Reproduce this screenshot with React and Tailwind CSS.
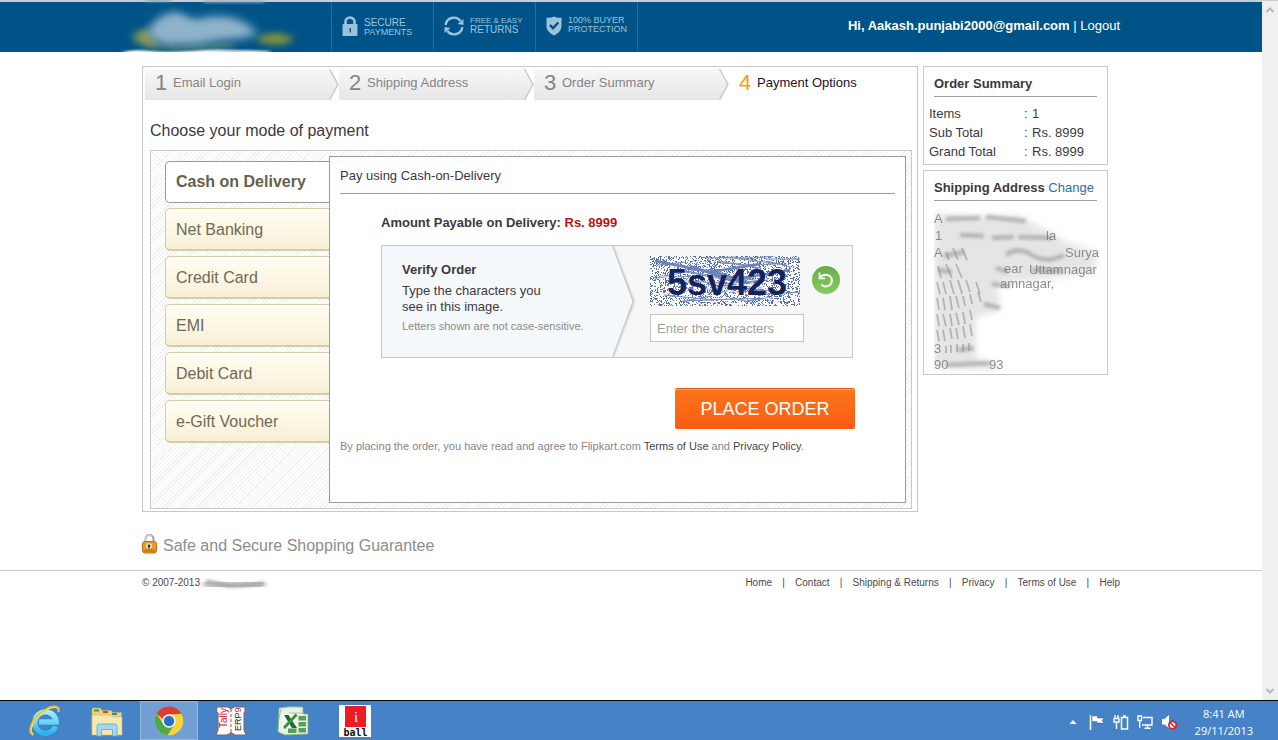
import React from "react";

const steps = [
  { n: 1, label: "Email Login", width: "w-[194px]" },
  { n: 2, label: "Shipping Address", width: "w-[195px]" },
  { n: 3, label: "Order Summary", width: "w-[195px]" },
];

const modes = ["Cash on Delivery", "Net Banking", "Credit Card", "EMI", "Debit Card", "e-Gift Voucher"];

const summary = [
  ["Items", "1"],
  ["Sub Total", "Rs. 8999"],
  ["Grand Total", "Rs. 8999"],
];

const footerLinks = ["Home", "Contact", "Shipping & Returns", "Privacy", "Terms of Use", "Help"];

function makeRandom(seed) {
  let s = seed;
  return () => {
    s = (s * 1103515245 + 12345) % 2147483648;
    return s / 2147483648;
  };
}

function noisePath(seed, count) {
  const next = makeRandom(seed);
  let d = "";
  for (let i = 0; i < count; i++) {
    const x = Math.floor(next() * 150);
    const y = Math.floor(next() * 50);
    d += `M${x} ${y}h1v1h-1z`;
  }
  return d;
}

function strokesPath(seed, count) {
  const next = makeRandom(seed);
  let d = "";
  for (let i = 0; i < count; i++) {
    const x = Math.floor(next() * 120);
    const y = Math.floor(next() * 46) + 2;
    const w = 14 + next() * 40;
    const h = (next() - 0.5) * 16;
    d += `M${x} ${y}l${w.toFixed(0)} ${h.toFixed(0)}`;
  }
  return d;
}

const noise = noisePath(7, 2900);
const scratches = strokesPath(91, 38);

function BrandSmudge() {
  return (
    <svg className="block h-[52px] w-[189px] overflow-visible" viewBox="0 0 189 52" aria-hidden="true">
      <defs>
        <filter id="b6" x="-40" y="-20" width="240" height="100" filterUnits="userSpaceOnUse"><feGaussianBlur stdDeviation="5" /></filter>
        <filter id="b4" x="-40" y="-20" width="240" height="100" filterUnits="userSpaceOnUse"><feGaussianBlur stdDeviation="4 3" /></filter>
        <filter id="b2" x="-60" y="-20" width="260" height="100" filterUnits="userSpaceOnUse"><feGaussianBlur stdDeviation="2 1.2" /></filter>
      </defs>
      <g filter="url(#b4)">
        <path d="M-8 33Q0 24 10 28L18 46Q4 48 -8 38Z" fill="#84965a" />
        <path d="M6 44L90 41L92 46L30 48Z" fill="#6f8f68" opacity="0.8" />
        <ellipse cx="133" cy="37" rx="17" ry="6" fill="#7b913f" />
      </g>
      <path d="M6 28Q16 12 34 10L52 18Q74 12 92 16Q108 22 116 31Q104 38 84 37L56 42L24 42Q8 38 6 28Z" fill="#8db2ca" filter="url(#b6)" />
      <path d="M14 28Q22 14 38 14L54 22Q74 16 92 22L104 30L50 36L22 40Z" fill="#90b3ca" opacity="0.6" filter="url(#b4)" />
      <path d="M-20 50Q-8 47 8 49T50 49T85 48L130 49Q124 52 104 51Q90 50 70 51Q40 58 12 55Q-6 56 -20 50Z" fill="#fff" filter="url(#b2)" />
      <path d="M4 -1h25M62 0h60" stroke="#7ea0bb" strokeWidth="2" filter="url(#b2)" />
    </svg>
  );
}

function LockMark() {
  return (
    <svg className="h-5 w-4" viewBox="0 0 16 20" aria-hidden="true">
      <path d="M3.5 9V5.5a4.5 4 0 0 1 9 0V9" fill="none" stroke="#9cc3dd" strokeWidth="2.6" />
      <rect x="0.5" y="8" width="15" height="12" rx="1" fill="#9cc3dd" />
      <path d="M7.5 12h1.5v4.5h-1.5z" fill="#1d5580" />
    </svg>
  );
}

function ReturnsMark() {
  return (
    <svg className="h-5 w-5" viewBox="0 0 20 20" aria-hidden="true">
      <g fill="none" stroke="#9cc3dd" strokeWidth="2.4">
        <path d="M1.6 9A8.4 8.4 0 0 1 16.600 5" />
        <path d="M18.4 11A8.4 8.4 0 0 1 3.400 15" />
      </g>
      <path d="M19.5 3v6l-6 -1zM0.5 17v-6l6 1z" fill="#9cc3dd" />
    </svg>
  );
}

function ShieldMark() {
  return (
    <svg className="h-5 w-4" viewBox="0 0 16 20" aria-hidden="true">
      <path d="M0.5 1.500Q5 2.500 8 0.500Q11 2.500 15.500 1.500V11Q14.500 16.500 8 19.500Q1.500 16.500 0.500 11Z" fill="#9cc3dd" />
      <path d="M4 9l3 3.300L12.300 6.500" fill="none" stroke="#0d4d7c" strokeWidth="2.400" />
    </svg>
  );
}

function Trust({ icon, top, bottom, topCls, bottomCls }) {
  return (
    <div className="flex w-[102px] items-start gap-1.5 border-l border-[#2b6b99] pt-3.5 pl-2.5 whitespace-nowrap text-[#9cc3dd]">
      {icon}
      <div className="flex flex-col">
        <span className={topCls}>{top}</span>
        <span className={bottomCls}>{bottom}</span>
      </div>
    </div>
  );
}

function Header() {
  return (
    <header className="h-[52px] border-t-2 border-[#c6cdd4] bg-[#005387] px-5">
      <div className="mx-auto flex h-full max-w-[978px]">
        <div className="h-full w-[189px] shrink-0"><BrandSmudge /></div>
        <Trust icon={<LockMark />} top="SECURE" bottom="PAYMENTS" topCls="pt-0.5 text-[10px] leading-[9px]" bottomCls="text-[9px] leading-[10px]" />
        <Trust icon={<ReturnsMark />} top="FREE & EASY" bottom="RETURNS" topCls="text-[8px] leading-[9px]" bottomCls="text-[10px] leading-[10px]" />
        <Trust icon={<ShieldMark />} top="100% BUYER" bottom="PROTECTION" topCls="text-[9px] leading-[9px]" bottomCls="text-[9px] leading-[8px]" />
        <div className="w-px bg-[#2b6b99]" />
        <p className="ml-auto pt-3.5 text-[13px] leading-[20px] whitespace-nowrap text-white">
          <b>Hi, Aakash.punjabi2000@gmail.com</b> | <a href="#logout">Logout</a>
        </p>
      </div>
    </header>
  );
}

function Chevron() {
  return (
    <svg className="ml-auto h-[31px] w-[10px]" viewBox="0 0 10 31" aria-hidden="true">
      <path d="M0 0H10V31H0L9 15.500Z" fill="#fff" />
      <path d="M0.500 0L9 15.500L0.500 31" fill="none" stroke="#c8c8c8" strokeWidth="1.400" />
    </svg>
  );
}

function Steps() {
  return (
    <ol className="flex h-[31px] pl-0.5 leading-[28px]">
      {steps.map((s) => (
        <li key={s.n} className={`${s.width} flex items-start bg-linear-to-b from-[#f8f8f8] to-[#e6e6e6] pl-2.5 text-[#848484]`}>
          <span className="w-[18px] text-[22px]">{s.n}</span>
          <span className="text-[13px]">{s.label}</span>
          <Chevron />
        </li>
      ))}
      <li className="flex items-start pl-2.5">
        <span className="w-[18px] text-[22px] text-[#ff9c0a]">4</span>
        <span className="text-[13px] text-[#1c0f1f]">Payment Options</span>
      </li>
    </ol>
  );
}

function Modes() {
  return (
    <nav className="flex w-[178px] shrink-0 flex-col gap-[5px] pt-[5px] pl-[14px]">
      {modes.map((m, i) => (
        <button
          key={m}
          type="button"
          className={
            i === 0
              ? "h-[42px] rounded-l-[5px] border border-r-0 border-[#99998f] bg-white pl-2.5 text-left text-base font-bold text-[#665f4b]"
              : "h-[43px] rounded-l-[5px] border border-r-0 border-b-2 border-[#d6cba8] bg-linear-to-b from-[#fffef4] to-[#f9efd6] pt-0.5 pl-2.5 text-left text-base text-[#706953]"
          }
        >
          {m}
        </button>
      ))}
    </nav>
  );
}

function Captcha() {
  return (
    <svg className="block h-[50px] w-[150px]" viewBox="0 0 150 50" role="img" aria-label="5sv423">
      <rect width="150" height="50" fill="#fdfdfd" />
      <path d={noise} fill="#5870a9" shapeRendering="crispEdges" />
      <path d={scratches} fill="none" stroke="#7788ba" strokeWidth="1" />
      <path d="M5 5L60 16L110 8M40 10L80 24L140 14M60 14L100 28" fill="none" stroke="#6f82b8" strokeWidth="2.500" />
      <path d="M10 20L130 45M10 38L140 24M20 14L120 34" stroke="#fdfdfd" strokeWidth="1" />
      <text x="17" y="39" fontFamily="Liberation Sans Narrow, Liberation Sans, sans-serif" fontWeight="700" fontSize="36" fill="#13235f">5sv423</text>
    </svg>
  );
}

function Verify() {
  return (
    <div className="flex h-[113px] w-[472px] border border-[#c8c8c8] bg-[#f7f7f7]">
      <div className="w-[230px] bg-[#f4f8fa] pt-4 pl-5 text-[13px] leading-[16px] whitespace-nowrap text-[#3d3a40]">
        <h3 className="pb-[5px] font-bold">Verify Order</h3>
        <p>Type the characters you<br />see in this image.</p>
        <p className="pt-[3px] text-[11px] text-[#8b8b8b]">Letters shown are not case-sensitive.</p>
      </div>
      <svg className="h-[111px] w-[38px]" viewBox="0 0 38 111" aria-hidden="true">
        <defs><filter id="sh"><feGaussianBlur stdDeviation="1" /></filter></defs>
        <path d="M0 0L21 55.500L0 111" fill="none" stroke="#b4b4b4" strokeWidth="2.400" filter="url(#sh)" />
        <path d="M0 0L20.500 55.500L0 111Z" fill="#f4f8fa" />
      </svg>
      <div className="flex flex-col gap-2 pt-2.5">
        <Captcha />
        <input
          type="text"
          aria-label="Enter the characters"
          placeholder="Enter the characters"
          className="h-7 w-[154px] border border-[#c4c4c4] bg-white px-1.5 text-[13px] placeholder:text-[#a09f9a]"
        />
      </div>
      <button type="button" aria-label="New image" className="mt-5 ml-2 h-7 w-7">
        <svg viewBox="0 0 28 28" aria-hidden="true">
          <defs><linearGradient id="g" x2="0" y2="1"><stop stopColor="#69ad4a" /><stop offset="1" stopColor="#86cc60" /></linearGradient></defs>
          <circle cx="14" cy="14" r="14" fill="url(#g)" />
          <path d="M8.500 10.800C13 7 19.800 9 19.800 14.500C19.800 20.500 13 22 9.500 18.800" fill="none" stroke="#fff" strokeWidth="2" />
          <path d="M7.500 6.500V12.300H13" fill="none" stroke="#fff" strokeWidth="1.800" />
        </svg>
      </button>
    </div>
  );
}

function PaymentPanel() {
  return (
    <div className="min-w-0 flex-1 border border-[#9b9b8f] bg-white px-2.5 pt-[11px] text-[#3b383f]">
      <h2 className="border-b border-[#9f9f99] pb-[9px] text-[13px] leading-[16px]">Pay using Cash-on-Delivery</h2>
      <div className="pt-[21px] pl-[41px]">
        <p className="pb-3.5 text-[13px] leading-[16px] font-bold">
          Amount Payable on Delivery: <span className="text-[#bb1113]">Rs. 8999</span>
        </p>
        <Verify />
      </div>
      <div className="flex justify-end pt-[30px] pr-10">
        <button type="button" className="h-[41px] w-[180px] rounded-[2px] border-t border-[#d9600f] bg-linear-to-b from-[#fb741b] to-[#f95c12] text-lg text-white shadow-[inset_0_1px_0_#ffa560]">
          PLACE ORDER
        </button>
      </div>
      <p className="pt-2.5 text-[11px] leading-[14px] text-[#85858a]">
        By placing the order, you have read and agree to Flipkart.com <a href="#terms" className="text-[#45424a]">Terms of Use</a> and <a href="#privacy" className="text-[#45424a]">Privacy Policy</a>.
      </p>
    </div>
  );
}

function AddressSmudge() {
  return (
    <svg className="block h-[168px] w-[176px]" viewBox="0 0 176 168" fontFamily="Liberation Sans, Arial, sans-serif" fontSize="13" aria-hidden="true">
      <defs>
        <filter id="s3" x="-30%" y="-30%" width="160%" height="160%"><feGaussianBlur stdDeviation="3" /></filter>
        <filter id="s1" x="-30%" y="-60%" width="160%" height="220%"><feGaussianBlur stdDeviation="1.700 1.500" /></filter>
        <filter id="s0" x="-10%" y="-20%" width="120%" height="140%"><feGaussianBlur stdDeviation="0.700" /></filter>
      </defs>
      <path d="M0 8L86 10L96 16L120 28L132 36L164 46L160 68L115 72L64 78L66 104L42 112L42 152L66 158L62 164L0 162Z" fill="#cfcccf" opacity="0.500" filter="url(#s3)" />
      <g filter="url(#s1)" stroke="#8d898f" fill="none" strokeWidth="5" opacity="0.500">
        <path d="M12 13L46 12M52 11L92 15" />
        <path d="M26 29L50 30M58 32L80 31M84 31L118 32" />
        <path d="M10 50L30 46M72 49Q84 40 98 49T130 49" />
        <path d="M4 64L18 66M62 62L74 66M98 64L128 65" />
        <path d="M58 78L76 80" />
        <path d="M50 98L66 102" />
        <path d="M24 144L40 142M12 159L56 157" />
      </g>
      <g filter="url(#s0)" stroke="#8d898f" fill="none" strokeWidth="1.800" opacity="0.550">
        <path d="M12 46L15 54M19 42L24 54M28 42L33 54M4 60L7 72M12 58L18 72M22 58L28 72" />
        <path d="M3 76L6 88M9 76L12 88M16 74L20 88M24 74L28 88M32 74L36 86M42 76L46 88" />
        <path d="M3 92L5 104M9 92L11 104M16 90L18 104M22 90L25 102M29 90L31 100M36 88L38 98M44 86L47 96" />
        <path d="M3 108L5 120M9 108L12 120M16 108L18 120M22 107L25 119M29 106L31 118M36 104L38 114" />
        <path d="M3 124L5 135M9 124L11 135M16 122L18 133M22 122L24 133M29 120L31 132M36 118L38 130" />
        <path d="M12 140V147M17 139V147M23 138V146M29 138V146M35 137V145" />
      </g>
      <g fill="#77737a" filter="url(#s0)" opacity="0.800">
        <text x="0" y="17">A</text>
        <text x="1" y="34">1</text>
        <text x="112" y="34">la</text>
        <text x="0" y="51">A</text>
        <text x="131" y="51">Surya</text>
        <text x="70" y="67">ear</text>
        <text x="95" y="68">Uttamnagar</text>
        <text x="66" y="82">amnagar,</text>
        <text x="0" y="147">3</text>
        <text x="0" y="163">90</text>
        <text x="55" y="163">93</text>
      </g>
    </svg>
  );
}

function Sidebar() {
  return (
    <aside className="flex w-[185px] shrink-0 flex-col gap-[5px] text-[13px] text-[#3b383f]">
      <section className="h-[99px] border border-[#c8c8c8] bg-white px-[5px] pt-[9px]">
        <h2 className="mx-[5px] border-b border-[#a09f9d] pb-1 leading-[16px] font-bold">Order Summary</h2>
        <table className="mt-[7px] w-full leading-[19px]">
          <tbody>
            {summary.map(([k, v]) => (
              <tr key={k}>
                <th scope="row" className="w-[95px] text-left font-normal">{k}</th>
                <td className="w-2">:</td>
                <td>{v}</td>
              </tr>
            ))}
          </tbody>
        </table>
      </section>
      <section className="h-[205px] border border-[#c8c8c8] bg-white px-2.5 pt-[9px]">
        <h2 className="border-b border-[#a09f9d] pb-1 leading-[16px] font-bold whitespace-nowrap">
          Shipping Address <a href="#change" className="font-normal text-[#2f6ca8]">Change</a>
        </h2>
        <div className="pt-[5px]"><AddressSmudge /></div>
      </section>
    </aside>
  );
}

function Guarantee() {
  return (
    <div className="flex items-start gap-1.5 pt-[22px] pb-3.5">
      <svg className="h-5 w-[15px]" viewBox="0 0 15 20" aria-hidden="true">
        <path d="M3.500 9V5a4 4 0 0 1 8 0V9" fill="none" stroke="#9a9fa0" strokeWidth="2" />
        <path d="M3.500 8V5a4 4 0 0 1 6-3.400" fill="none" stroke="#dfe3e4" strokeWidth="1" />
        <rect x="0.500" y="7.500" width="14" height="11.500" rx="2.500" fill="#f29a1c" stroke="#b07320" />
        <path d="M1.500 16.500Q7 14 13.500 16V18H2Z" fill="#d97a0c" />
        <circle cx="7" cy="12" r="3" fill="#e9e4d4" /><circle cx="7" cy="12" r="1.400" fill="#333" /><path d="M6.500 12h1v3h-1z" fill="#333" />
      </svg>
      <p className="pt-0.5 text-base leading-5 text-[#8d8d8d]">Safe and Secure Shopping Guarantee</p>
    </div>
  );
}

function Footer() {
  return (
    <footer className="border-t border-[#cacaca] px-5 pt-1">
      <div className="mx-auto flex max-w-[978px] items-center justify-between text-[10px] leading-4 text-[#4b484e]">
        <p className="flex items-center">
          © 2007-2013
          <svg className="h-4 w-[70px] overflow-visible" viewBox="0 0 70 16" aria-hidden="true">
            <g filter="url(#s3)"><path d="M4 8L30 11L64 9" fill="none" stroke="#a5a3a6" strokeWidth="8" /></g>
            <g filter="url(#s1)"><path d="M6 6Q14 7 24 10T64 8" fill="none" stroke="#aaa8ab" strokeWidth="3" /></g>
          </svg>
        </p>
        <ul className="flex">
          {footerLinks.map((l, i) => (
            <li key={l} className="flex">
              {i > 0 && <span className="w-[23px] text-center">|</span>}
              <a href="#footer">{l}</a>
            </li>
          ))}
        </ul>
      </div>
    </footer>
  );
}

function Scrollbar() {
  return (
    <div className="flex w-4 shrink-0 flex-col items-center justify-between border-t border-[#c6cdd4] bg-[#f0f0f0] py-1">
      <svg className="h-2.5 w-2.5" viewBox="0 0 10 10" aria-hidden="true"><path d="M1.500 7L5 3.500L8.500 7" fill="none" stroke="#b9b9b9" strokeWidth="2" /></svg>
      <svg className="h-2.5 w-2.5" viewBox="0 0 10 10" aria-hidden="true"><path d="M1.500 3L5 6.500L8.500 3" fill="none" stroke="#b9b9b9" strokeWidth="2" /></svg>
    </div>
  );
}

function ExplorerE() {
  return (
    <svg className="h-8 w-8" viewBox="0 0 32 32" aria-hidden="true">
      <defs><linearGradient id="ie" x2="0" y2="1"><stop stopColor="#a6ecff" /><stop offset="1" stopColor="#2fb2ec" /></linearGradient></defs>
      <path d="M26.500 21.500A10.700 10.700 0 1 1 27.200 17H10" fill="none" stroke="#2187c9" strokeWidth="6.600" />
      <path d="M26.500 21.500A10.700 10.700 0 1 1 27.200 17H10" fill="none" stroke="url(#ie)" strokeWidth="5.400" />
      <path d="M4.500 30C-2 27 3 14 14 6.500C22 0.500 31 -0.500 29.500 7" fill="none" stroke="#f0bd24" strokeWidth="2.400" />
      <path d="M4 29C0 26 3.500 15 14 7.500C21 2 28 1 29 4" fill="none" stroke="#fbe56f" strokeWidth="0.900" />
    </svg>
  );
}

function FolderIcon() {
  return (
    <svg className="h-8 w-8" viewBox="0 0 32 32" aria-hidden="true">
      <path d="M1 8V4.500Q1 3 2.500 3H9l2 2.500H20l2 2H30.500V29H1Z" fill="#e8d283" stroke="#c8aa4b" strokeWidth="0.600" />
      <path d="M3 4.500h5v2H3z" fill="#3c9a51" /><path d="M12 6h5v2h-5z" fill="#c84b36" /><path d="M21 8h5v2h-5z" fill="#3c7cc4" />
      <path d="M1 10H19l2 2H31V30H1Z" fill="#f6e9ad" stroke="#d5bb63" strokeWidth="0.600" />
      <path d="M6 31V21Q6 19 8 19H24Q26 19 26 21V31H21.500V24.500H10.500V31Z" fill="#a5d6f0" stroke="#5fa6d2" strokeWidth="0.800" />
    </svg>
  );
}

function ChromeIcon() {
  return (
    <svg className="h-[30px] w-[30px]" viewBox="0 0 30 30" aria-hidden="true">
      <circle cx="15" cy="15" r="14.300" fill="#f9d33c" />
      <path d="M2.600 7.800A14.300 14.300 0 0 1 27.400 7.800L15 8.500A6.500 6.500 0 0 0 9 13Z" fill="#dc3c33" />
      <path d="M2.600 7.800A14.300 14.300 0 0 0 13.500 29.200L20.500 18.500A6.500 6.500 0 0 1 9.400 18.200Z" fill="#4bab4c" />
      <circle cx="15" cy="15" r="6.700" fill="#f4f6f8" />
      <circle cx="15" cy="15" r="5.200" fill="#2b6fc4" />
    </svg>
  );
}

function TallyIcon() {
  return (
    <svg className="h-8 w-8" viewBox="0 0 32 32" aria-hidden="true">
      <path d="M2 2H13L16 4L19 2H30V6L29 8V25L31 30H20L16 27.500L12 30H1L3 25V8L1.500 6Z" fill="#fff" stroke="#8a5a55" strokeWidth="1" />
      <path d="M16 4V27" stroke="#d13a3a" strokeWidth="1" strokeDasharray="3 2" />
      <text transform="rotate(-90 12 23)" x="12" y="23" fontFamily="Liberation Sans, sans-serif" fontSize="10" fill="#c2202a">Tally</text>
      <text transform="rotate(-90 26 26)" x="26" y="26" fontFamily="Liberation Sans, sans-serif" fontSize="9" fill="#1a1a1a">ERP<tspan fill="#c2202a">9</tspan></text>
    </svg>
  );
}

function SheetIcon() {
  return (
    <svg className="h-8 w-8" viewBox="0 0 32 32" aria-hidden="true">
      <path d="M2 3Q12 1 26 2V9H31V29L8 30L1 27Z" fill="#e8f1e6" stroke="#7eaf79" strokeWidth="0.800" />
      <path d="M12 8H27M4 4Q3 9 2 14" stroke="#9fc79a" strokeWidth="1" />
      <path d="M5 9H20V23H5Z" fill="#f5faf3" />
      <g fill="#5c9e56"><path d="M21.500 11h7.500v4.500h-7.500zM21.500 17h7.500v4.500h-7.500zM21.500 23h7.500v4.500h-7.500zM11 23.500h8.500v4.500H11z" /></g>
      <path d="M7 10H11.500L20 23H15Z" fill="#1f6b2e" />
      <path d="M19.500 9.500L7 23" stroke="#3c8d45" strokeWidth="3" />
    </svg>
  );
}

function BallIcon() {
  return (
    <svg className="h-8 w-8" viewBox="0 0 32 32" aria-hidden="true">
      <rect width="32" height="32" fill="#fff" />
      <rect x="6" y="1" width="21" height="21" fill="#ed1b24" />
      <text x="17" y="17" textAnchor="middle" fontFamily="Liberation Serif, serif" fontSize="15" fill="#fff">i</text>
      <text x="16.500" y="31" textAnchor="middle" fontFamily="DejaVu Sans Mono, monospace" fontWeight="700" fontSize="10" fill="#111">ball</text>
    </svg>
  );
}

const apps = [
  ["Internet Explorer", ExplorerE],
  ["File Explorer", FolderIcon],
  ["Chrome", ChromeIcon],
  ["Tally", TallyIcon],
  ["Excel", SheetIcon],
  ["iball", BallIcon],
];

function TrayIcons() {
  return (
    <div className="flex items-center gap-2">
      <svg className="mr-1 h-4 w-2" viewBox="0 0 8 16" aria-hidden="true"><path d="M0.500 10L4 6L7.500 10Z" fill="#fff" /></svg>
      <svg className="h-4 w-4" viewBox="0 0 16 16" aria-hidden="true">
        <path d="M1.500 1V16" stroke="#fff" strokeWidth="1.500" /><path d="M3 2H8.500V4H15L13 6.500L15 9H8V7.500H3Z" fill="#fff" stroke="#2c4f78" strokeWidth="0.400" />
      </svg>
      <svg className="h-4 w-4" viewBox="0 0 16 16" aria-hidden="true">
        <path d="M2 1V4M5 1V4M0.500 4.500H6.500M1 5V8H6V5M3.500 8V15" fill="none" stroke="#fff" strokeWidth="1.400" />
        <path d="M8.500 3.500H14.500V15H8.500ZM10 2H13" fill="none" stroke="#fff" strokeWidth="1.500" />
      </svg>
      <svg className="h-4 w-4" viewBox="0 0 16 16" aria-hidden="true">
        <path d="M6 3.500H15V11H5M10.500 11V14M7.500 14.300H13.500" fill="none" stroke="#fff" strokeWidth="1.400" />
        <path d="M1 2H4.500V6.500H1ZM2.700 7V14" fill="none" stroke="#fff" strokeWidth="1.400" />
      </svg>
      <svg className="h-4 w-4" viewBox="0 0 16 16" aria-hidden="true">
        <path d="M1 5H3.500L8 1V14L3.500 10.500H1Z" fill="#fff" />
        <circle cx="11.500" cy="11" r="3.700" fill="#fff" stroke="#d8232b" strokeWidth="1.700" /><path d="M9 8.500L14 13.500" stroke="#d8232b" strokeWidth="1.600" />
      </svg>
    </div>
  );
}

function Taskbar() {
  return (
    <div className="flex h-10 shrink-0 border-t border-black bg-[#4683c6] pl-4">
      <div className="flex gap-1">
        {apps.map(([name, Icon]) => (
          <button
            key={name}
            type="button"
            aria-label={name}
            className={`flex w-[58px] items-center justify-center ${name === "Chrome" ? "border border-[#93b8e0] bg-[#719fd3]" : ""}`}
          >
            <Icon />
          </button>
        ))}
      </div>
      <div className="ml-auto flex items-center gap-[18px] pt-0.5 pr-[25px] text-white">
        <TrayIcons />
        <p className="text-center font-['Open_Sans',sans-serif] text-[11px] leading-[17px]">8:41 AM<br />29/11/2013</p>
      </div>
    </div>
  );
}

export default function App() {
  return (
    <div className="flex min-h-screen flex-col bg-white font-['Liberation_Sans',Arial,sans-serif]">
      <div className="flex flex-1">
        <div className="min-w-0 flex-1">
          <Header />
          <main className="px-5 pt-3.5">
            <div className="mx-auto max-w-[978px]">
              <div className="flex items-start gap-[5px] pr-3">
                <section className="min-w-0 flex-1 border border-[#c8c8c8] pt-0.5 pb-0.5">
                  <Steps />
                  <h1 className="flex h-[50px] items-center pt-3 pl-[7px] text-base text-[#3b383f]">Choose your mode of payment</h1>
                  <div className="mr-[5px] ml-[7px] flex h-[359px] border border-[#c8c8c8] bg-[repeating-linear-gradient(135deg,#ffffff_0px,#ffffff_2px,#f0f0f0_2px,#f0f0f0_3px)] pt-[5px] pr-[5px] pb-[5px]">
                    <Modes />
                    <PaymentPanel />
                  </div>
                </section>
                <Sidebar />
              </div>
              <Guarantee />
            </div>
          </main>
          <Footer />
        </div>
        <Scrollbar />
      </div>
      <Taskbar />
    </div>
  );
}
